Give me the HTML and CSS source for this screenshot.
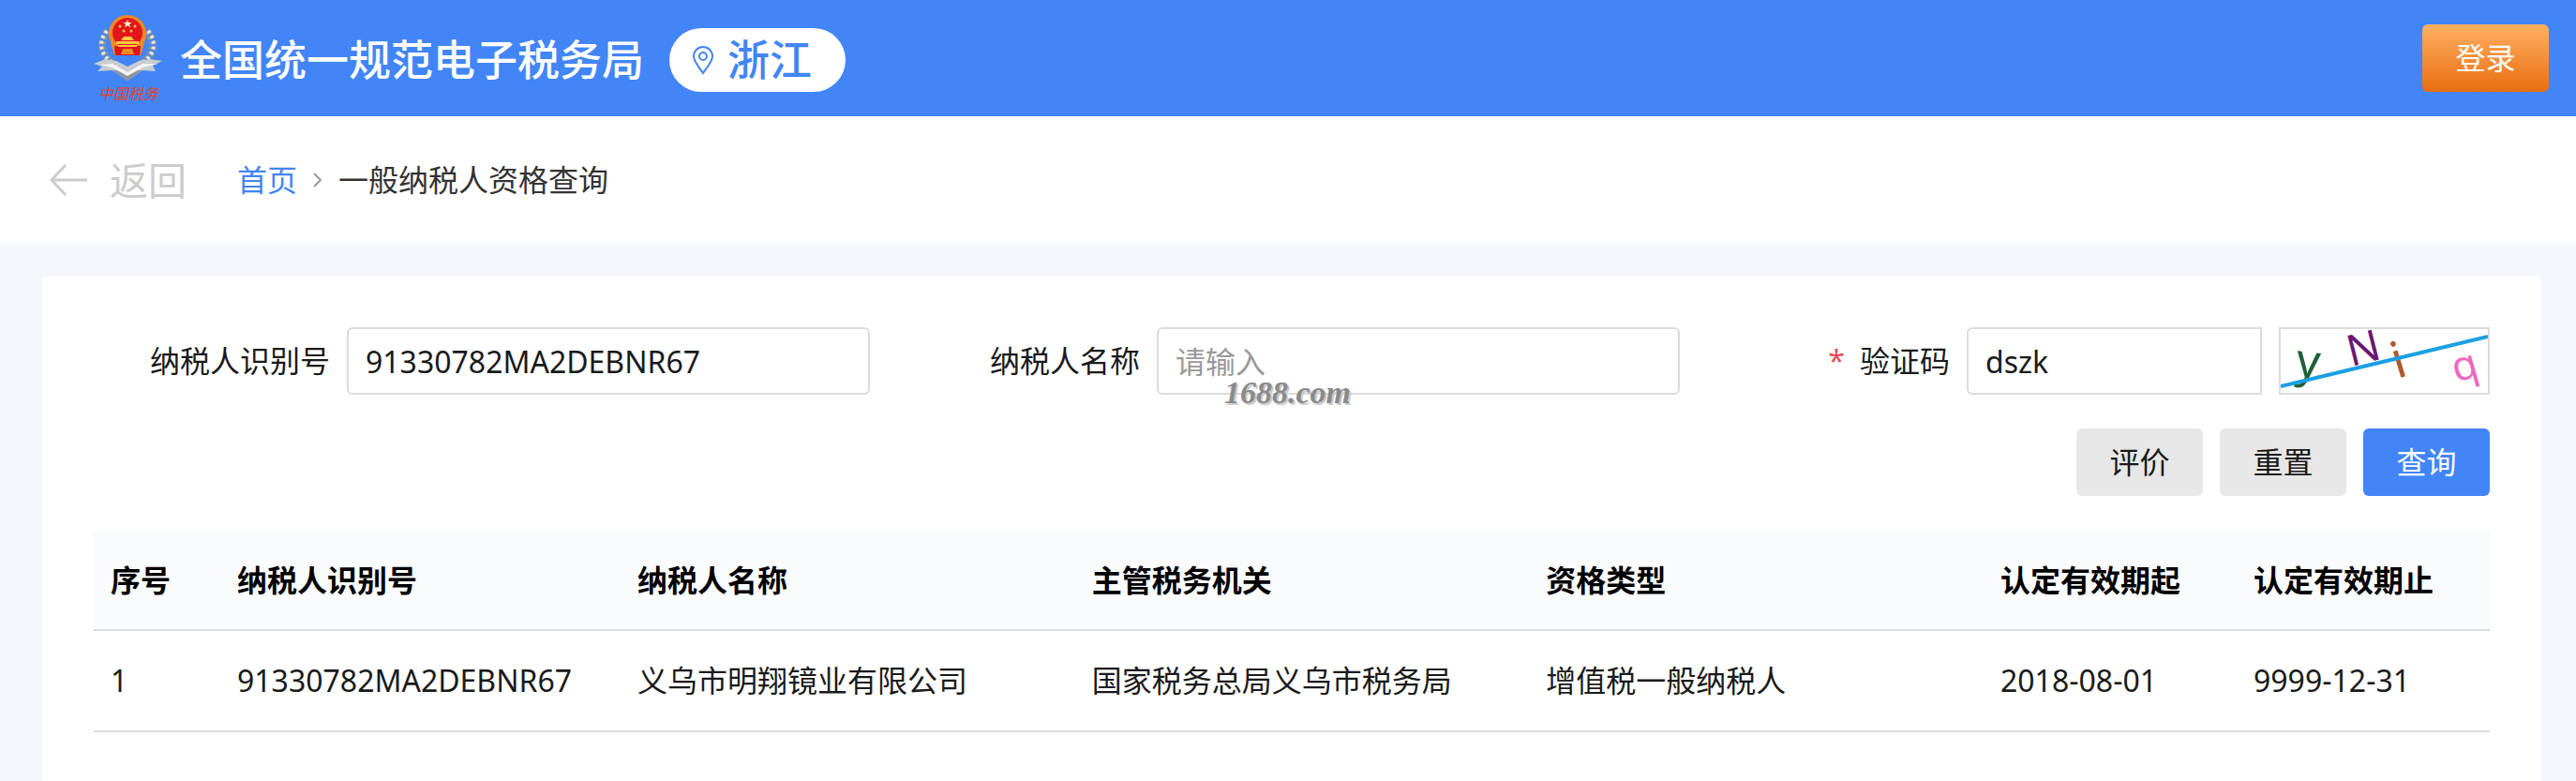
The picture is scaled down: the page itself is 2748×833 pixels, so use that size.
FILE: index.html
```html
<!DOCTYPE html>
<html lang="zh-CN">
<head>
    <meta charset="UTF-8">
    <meta name="viewport" content="width=device-width, initial-scale=1">
    <title>一般纳税人资格查询</title>
    <link rel="stylesheet" href="styles.css">
</head>
<body>

<header class="header">
    <div class="brand">
        <svg class="emblem" viewBox="0 0 74 98" aria-hidden="true">
            <!-- 麦穗 -->
            <g fill="none" stroke="#8d9299" stroke-width="8" stroke-dasharray="4 2">
                <path d="M15 18C5 30 7 46 26 56"/>
                <path d="M57 18C67 30 65 46 46 56"/>
            </g>
            <g fill="none" stroke="#e6e8ea" stroke-width="4" stroke-dasharray="3 3">
                <path d="M14 18C4 30 6 46 26 55"/>
                <path d="M58 18C68 30 66 46 46 55"/>
            </g>
            <!-- 国徽 -->
            <circle cx="36" cy="21" r="20" fill="#f08a24"/>
            <path d="M18 30H54L50 44H22Z" fill="#f08a24"/>
            <circle cx="36" cy="20" r="16" fill="#e3171b"/>
            <path d="M22 34H50L49 44H23Z" fill="#d9161a"/>
            <path d="M36 6l1.300 3h3.200l-2.500 2 1 3.200-3-2-3 2 1-3.200-2.500-2h3.200z" fill="#fff3c4"/>
            <g fill="#ffc844">
                <circle cx="28" cy="13" r="1.500"/>
                <circle cx="44" cy="13" r="1.500"/>
                <circle cx="32" cy="18" r="1.500"/>
                <circle cx="40" cy="18" r="1.500"/>
                <path d="M32 24H40L43 28H29Z"/>
                <path d="M24 29H48V32H24Z"/>
                <path d="M26 33H46V35H26Z"/>
                <path d="M31 37H41L43 43H29Z" fill="#f08a24"/>
            </g>
            <!-- 飘带 -->
            <path d="M0 53L12 48 24 50 36 56 48 50 60 48 73 50 63 55 66 61 52 60 36 71 20 60 4 61 9 56Z" fill="#c9ccd0"/>
            <path d="M6 54L20 53 36 62 52 53 68 53 52 57 36 68 20 57Z" fill="#f4f5f6"/>
            <path d="M20 60L36 71 52 60 47 60 36 66 25 60Z" fill="#8f949b"/>
            <text class="emblem-text" x="5" y="91">中国税务</text>
        </svg>
        <h1 class="site-name">全国统一规范电子税务局</h1>
        <div class="region">
            <svg class="pin" viewBox="0 0 24 32" aria-hidden="true">
                <path d="M12 30C9 25 2 18 2 12a10 10 0 0 1 20 0c0 6-7 13-10 18z"/>
                <circle cx="12" cy="12" r="4"/>
            </svg>
            <span>浙江</span>
        </div>
    </div>
    <button type="button" class="btn btn-login">登录</button>
</header>

<nav class="crumbs">
    <a href="#" class="back">
        <svg class="back-icon" viewBox="0 0 40 34" aria-hidden="true">
            <path d="M40 17H2M17 1L2 17L17 33"/>
        </svg>
        返回
    </a>
    <a href="#" class="home">首页</a>
    <svg class="chevron" viewBox="0 0 10 16" aria-hidden="true">
        <path d="M1 1L8 8L1 15"/>
    </svg>
    <span class="current">一般纳税人资格查询</span>
</nav>

<main class="card">
    <form class="search">
        <div class="field">
            <label for="taxNo">纳税人识别号</label>
            <div class="control">
                <input type="text" id="taxNo" value="91330782MA2DEBNR67">
            </div>
        </div>
        <div class="field">
            <label for="taxName">纳税人名称</label>
            <div class="control">
                <input type="text" id="taxName" placeholder="请输入">
                <span class="watermark">1688.com</span>
            </div>
        </div>
        <div class="field">
            <label for="code" class="required">验证码</label>
            <div class="control">
                <input type="text" id="code" class="code-input" value="dszk">
                <svg class="captcha" viewBox="0 0 221 68" role="img" aria-label="验证码图片">
                    <text transform="translate(15 50) rotate(6)" font-size="50" fill="#1f6136">y</text>
                    <text transform="translate(75 40) rotate(-14)" font-size="46" fill="#6c1573">N</text>
                    <text transform="translate(124 53) rotate(-17)" font-size="54" fill="#ad5a30">i</text>
                    <text transform="translate(187 57) rotate(-16)" font-size="44" fill="#ee68bd">q</text>
                    <path d="M0 61L221 8"/>
                </svg>
            </div>
        </div>
        <div class="actions">
            <button type="button" class="btn">评价</button>
            <button type="reset" class="btn">重置</button>
            <button type="submit" class="btn btn-primary">查询</button>
        </div>
    </form>

    <table class="result">
        <colgroup>
            <col class="col-index">
            <col class="col-no">
            <col>
            <col>
            <col>
            <col class="col-date">
            <col class="col-date">
        </colgroup>
        <thead>
            <tr>
                <th>序号</th>
                <th>纳税人识别号</th>
                <th>纳税人名称</th>
                <th>主管税务机关</th>
                <th>资格类型</th>
                <th>认定有效期起</th>
                <th>认定有效期止</th>
            </tr>
        </thead>
        <tbody>
            <tr>
                <td>1</td>
                <td>91330782MA2DEBNR67</td>
                <td>义乌市明翔镜业有限公司</td>
                <td>国家税务总局义乌市税务局</td>
                <td>增值税一般纳税人</td>
                <td>2018-08-01</td>
                <td>9999-12-31</td>
            </tr>
        </tbody>
    </table>
</main>

</body>
</html>
```

FILE: styles.css
```css
*{
    margin:0;
    padding:0;
    box-sizing:border-box;
}

body {
    display:flex;
    flex-direction:column;
    min-height:100vh;
    background:#f6f7fa;
    color:#1a1a1a;
    font:32px/48px "Noto Sans","Noto Sans CJK SC",sans-serif;
}
a {
    text-decoration:none;
}
button,input {
    font:inherit;
    color:inherit;
}

/* 顶部 */
.header {
    display:flex;
    align-items:center;
    justify-content:space-between;
    height:124px;
    padding:0 29px 0 100px;
    background:#4285f6;
}
.brand {
    display:flex;
    align-items:center;
    padding-top:4px;
}
.emblem {
    width:74px;
    height:98px;
}
.emblem-text {
    fill:#e0452f;
    font-size:16px;
    font-style:italic;
}
.site-name {
    margin:0 27px 0 18px;
    color:#fff;
    font-size:45px;
    font-weight:500;
    line-height:68px;
}
.region {
    display:flex;
    align-items:center;
    gap:14px;
    height:68px;
    padding:0 36px 0 24px;
    border-radius:34px;
    background:#fff;
    color:#4285f6;
    font-size:45px;
    font-weight:500;
}
.pin {
    width:24px;
    height:32px;
    fill:none;
    stroke:#4285f6;
    stroke-width:2;
}

.btn {
    min-width:135px;
    height:72px;
    border:0;
    border-radius:6px;
    background:#e7e7e7;
    cursor:pointer;
}
.btn-primary {
    background:#4285f6;
    color:#fff;
}
.btn-login {
    background:linear-gradient(#ffb062,#e86e10);
    color:#fff;
}

/* 面包屑 */
.crumbs {
    display:flex;
    align-items:center;
    height:135px;
    padding:0 53px;
    background:#fff;
}
.back {
    display:flex;
    align-items:center;
    gap:24px;
    margin-right:54px;
    color:#ccc;
    font-size:41px;
}
.back-icon {
    width:40px;
    height:34px;
    fill:none;
    stroke:#ccc;
    stroke-width:3;
}
.home {
    color:#4285f6;
}
.chevron {
    width:10px;
    height:16px;
    margin:0 17px;
    fill:none;
    stroke:#999;
    stroke-width:2;
}
.current {
    color:#333;
}

/* 查询表单 */
.card {
    flex:1;
    margin:36px 38px 0 45px;
    padding:54px 54px 0 55px;
    background:#fff;
}
.search {
    display:grid;
    grid-template-columns:repeat(3,minmax(0,1fr));
    gap:36px;
    margin-bottom:37px;
}
.field {
    display:flex;
    align-items:center;
    gap:18px;
}
.field label {
    flex:none;
    width:252px;
    text-align:right;
}
.required::before {
    content:"*";
    margin-right:16px;
    color:#e34d59;
}
.control {
    position:relative;
    display:flex;
    flex:1;
    gap:18px;
    min-width:0;
}
.control input {
    flex:1;
    min-width:0;
    height:72px;
    padding:0 18px;
    border:2px solid #dcdcdc;
    border-radius:6px;
    background:#fff;
}
.control input::placeholder {
    color:#999;
}
.control .code-input {
    border-radius:6px 0 0 6px;
}
.captcha {
    flex:none;
    width:225px;
    height:72px;
    border:2px solid #dcdcdc;
    font-family:"Noto Sans",sans-serif;
}
.captcha path {
    fill:none;
    stroke:#1c9fe2;
    stroke-width:4;
}
.watermark {
    position:absolute;
    left:72px;
    top:50px;
    color:#8a8a8a;
    font:italic bold 34px/40px "Liberation Serif",serif;
    text-shadow:2px 2px 0 #ccc;
}
.actions {
    grid-column:1 / -1;
    display:flex;
    justify-content:flex-end;
    gap:18px;
}

/* 结果表格 */
.result {
    width:100%;
    table-layout:fixed;
    border-collapse:collapse;
}
.col-index {
    width:135px;
}
.col-no {
    width:427px;
}
.col-date {
    width:270px;
}
.result th,.result td {
    height:108px;
    padding:0 18px;
    border-bottom:2px solid #dcdcdc;
    text-align:left;
    white-space:nowrap;
}
.result th {
    height:106px;
    background:#fafbfd;
    color:#000;
}
```
